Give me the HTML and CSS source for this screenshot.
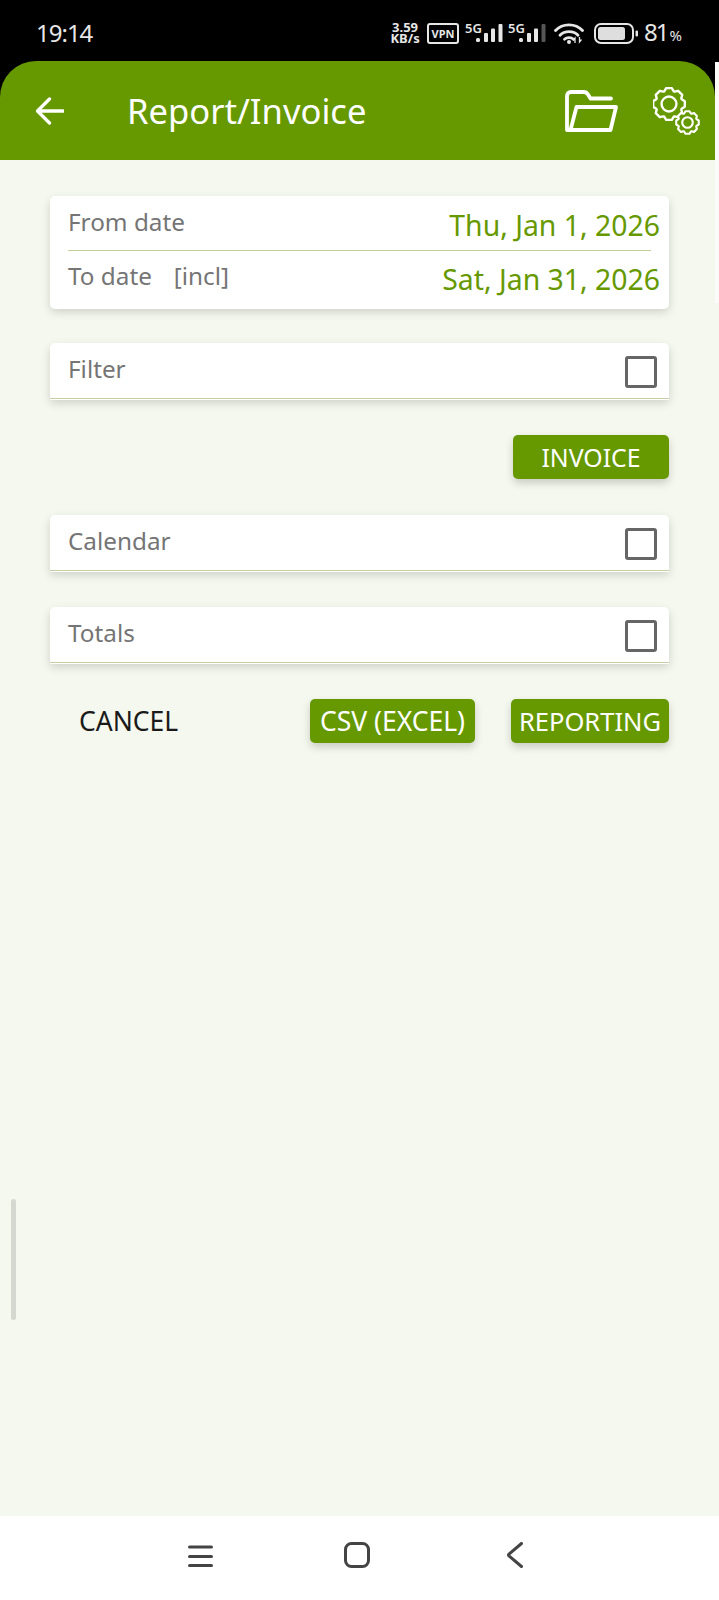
FILE: index.html
```html
<!DOCTYPE html>
<html lang="en">
<head>
    <meta charset="UTF-8">
    <meta name="viewport" content="width=device-width, initial-scale=1.0">
    <title>Report/Invoice</title>

    <link rel="stylesheet" href="styles.css">

</head>
<body>

    <svg class="defs" width="0" height="0">
        <symbol id="gear" viewBox="-12 -12 24 24" overflow="visible">
            <polygon points="-3,-8 -1.8,-10 1.8,-10 3,-8 3.54,-7.78 5.8,-8.34 8.34,-5.8 7.78,-3.54 8,-3 10,-1.8 10,1.8 8,3 7.78,3.54 8.34,5.8 5.8,8.34 3.54,7.78 3,8 1.8,10 -1.8,10 -3,8 -3.54,7.78 -5.8,8.34 -8.34,5.8 -7.78,3.54 -8,3 -10,1.8 -10,-1.8 -8,-3 -7.78,-3.54 -8.34,-5.8 -5.8,-8.34 -3.54,-7.78"/>
            <circle cx="0" cy="0" r="4.7"/>
        </symbol>
    </svg>

    <div class="statusBar">
        <span class="time">19:14</span>
        <div class="statusIcons">
            <span class="speed">3.59<br>KB/s</span>
            <span class="vpn">VPN</span>
            <svg class="signal" width="40" height="25" viewBox="0 0 40 25">
                <text x="0" y="14" class="signalText">5G</text>
                <rect x="11" y="19" width="4" height="4" rx="1.5"/>
                <rect x="19" y="14" width="4" height="9" rx="1"/>
                <rect x="26" y="9.500" width="4" height="13.500" rx="1"/>
                <rect x="33.500" y="5" width="4" height="18" rx="1"/>
            </svg>
            <svg class="signal" width="40" height="25" viewBox="0 0 40 25">
                <text x="0" y="14" class="signalText">5G</text>
                <rect x="11" y="19" width="4" height="4" rx="1.5"/>
                <rect x="19" y="14" width="4" height="9" rx="1"/>
                <rect x="26" y="9.500" width="4" height="13.500" rx="1"/>
                <rect x="33.500" y="5" width="4" height="18" rx="1" fill="#555"/>
            </svg>
            <svg class="wifi" width="31" height="22" viewBox="0 0 31 22">
                <g fill="none" stroke="#e6e6e6" stroke-width="2.8" stroke-linecap="round">
                    <path d="M1.5 8.5C8.5 1 21.5 1 28.500 8.500"/>
                    <path d="M6 13.200C10.500 8.500 19.500 8.500 24 13.200"/>
                    <path d="M10.500 17.300C12.800 15 17.200 15 19.500 17.300"/>
                </g>
                <circle cx="15" cy="20" r="2" fill="#e6e6e6"/>
                <path d="M21 21V16l-2 2.500M25.500 15v5l2-2.500" fill="none" stroke="#e6e6e6" stroke-width="1.300"/>
            </svg>
            <svg class="battery" width="44" height="21" viewBox="0 0 44 21">
                <rect x="1" y="1" width="38" height="19" rx="6" fill="none" stroke="#e6e6e6" stroke-width="2"/>
                <rect x="4" y="4" width="27" height="13" rx="2.500" fill="#dedede"/>
                <rect x="41.500" y="7.500" width="2.500" height="6" rx="1" fill="#e6e6e6"/>
            </svg>
            <span class="percent">81<small>%</small></span>
        </div>
    </div>

    <div class="page">
        <div class="sideStrip"></div>

        <div class="header">
            <svg class="backArrow" width="28" height="28" viewBox="0 0 28 28">
                <path d="M1.500 14H27M13.500 2L1.500 14L13.500 26" fill="none" stroke="#fff" stroke-width="3.300" stroke-linejoin="round" stroke-linecap="round"/>
            </svg>
            <h1 class="title">Report/Invoice</h1>
            <svg class="folder" width="53" height="42" viewBox="0 0 53 42">
                <path d="M5 40H2V6C2 3.500 3.500 2 6 2H19C21 2 22 3 23 4.500L25.500 8.500H46" fill="none" stroke="#fff" stroke-width="3.800" stroke-linecap="round" stroke-linejoin="round"/>
                <path d="M11.500 17H51L45.500 40H5.500Z" fill="none" stroke="#fff" stroke-width="3.800" stroke-linejoin="round"/>
            </svg>
            <svg class="gears" width="48" height="50" viewBox="0 0 48 50">
                <use href="#gear" x="-3" y="-2" width="38" height="38" class="gearBig"/>
                <use href="#gear" x="21" y="22" width="27" height="27" class="gearSmall"/>
            </svg>
        </div>

        <div class="content">
            <div class="card dateCard">
                <div class="dateRow fromRow">
                    <span class="label">From date</span>
                    <span class="dateValue">Thu, Jan 1, 2026</span>
                </div>
                <div class="divider"></div>
                <div class="dateRow toRow">
                    <span class="label">To date &nbsp; <span class="incl">[incl]</span></span>
                    <span class="dateValue">Sat, Jan 31, 2026</span>
                </div>
            </div>

            <div class="card checkCard">
                <span class="label">Filter</span>
                <span class="checkbox"></span>
            </div>

            <div class="invoiceRow">
                <button class="btn invoiceBtn">INVOICE</button>
            </div>

            <div class="card checkCard">
                <span class="label">Calendar</span>
                <span class="checkbox"></span>
            </div>

            <div class="card checkCard">
                <span class="label">Totals</span>
                <span class="checkbox"></span>
            </div>

            <div class="actions">
                <span class="cancel">CANCEL</span>
                <button class="btn csvBtn">CSV (EXCEL)</button>
                <button class="btn reportBtn">REPORTING</button>
            </div>
        </div>

        <div class="scrollThumb"></div>
    </div>

    <div class="navBar">
        <svg class="navMenu" width="25" height="22" viewBox="0 0 25 22">
            <path d="M1.500 2H23.500M1.500 11.500H23.500M1.500 20.500H23.500" stroke="#444" stroke-width="3" stroke-linecap="round"/>
        </svg>
        <svg class="navHome" width="26" height="26" viewBox="0 0 26 26">
            <rect x="1.500" y="1.500" width="23" height="23" rx="6" fill="none" stroke="#444" stroke-width="3"/>
        </svg>
        <svg class="navBack" width="16" height="26" viewBox="0 0 16 26">
            <path d="M14.500 1.500L2 12C1.300 12.700 1.300 13.300 2 14L14.500 24.500" fill="none" stroke="#444" stroke-width="3" stroke-linecap="round"/>
        </svg>
    </div>

</body>
</html>
```

FILE: styles.css
```css
*{padding: 0px; margin: 0px; box-sizing: border-box;}
html, body{width: 719px; height: 1600px; overflow: hidden;}
body{display: flex; flex-direction: column; background: #000; font-family: "Noto Sans", sans-serif;}
.defs{position: absolute;}

.statusBar{display: flex; align-items: center; height: 61px; padding: 5px 37px 0 36px; color: #e6e6e6;}
.time{font-size: 24px; line-height: 30px; letter-spacing: -1px;}
.statusIcons{display: flex; align-items: center; margin-left: auto;}
.speed{width: 44px; font-size: 13px; font-weight: 700; line-height: 11px; text-align: center;}
.vpn{width: 32px; height: 21px; border: 2px solid #e6e6e6; border-radius: 3px; font-size: 11px; font-weight: 700; line-height: 17px; text-align: center;}
.signal{margin: -3px 0 0 6px; fill: #e6e6e6;}
.signal + .signal{margin-left: 3px;}
.signalText{font-size: 13px; font-weight: 600;}
.wifi{margin-left: 6px;}
.battery{margin-left: 9px;}
.percent{margin-left: 6px; font-size: 24px; line-height: 30px; letter-spacing: -2px;}
.percent small{margin-left: 2px; font-size: 15px; letter-spacing: 0;}

.page{position: relative; flex: 1; display: flex; flex-direction: column;}
.sideStrip{position: absolute; top: 1px; right: 0; width: 4px; height: 241px; background: #fbfcf9;}

.header{display: flex; align-items: center; height: 99px; margin-right: 4px; padding: 0 14px 0 36px; background: #669900; border-radius: 36px 36px 0 0;}
.title{margin-left: 63px; color: #fff; font-size: 34.600px; font-weight: 400;}
.folder{margin-left: auto;}
.gears{margin-left: 35px; margin-top: 2px;}
.gearBig, .gearSmall{stroke: #fff; stroke-linejoin: round;}
.gearBig{fill: none; stroke-width: 1.500;}
.gearSmall{fill: #669900; stroke-width: 1.900;}

.content{flex: 1; display: flex; flex-direction: column; gap: 36px; padding: 36px 50px 0 50px; background: #f5f8ee;}
.card{background: #fff; border-radius: 5px; box-shadow: 0 1px 0 #fff, 0 4px 10px rgba(0, 0, 0, .16);}
.label{color: #757575; font-size: 24.300px;}
.incl{margin-left: 3px;}

.dateCard{display: flex; flex-direction: column; height: 112px; margin-bottom: -1px; padding: 0 9px 0 18px;}
.dateRow{display: flex; align-items: center; justify-content: space-between;}
.fromRow{height: 54px;}
.fromRow .label{padding-bottom: 3px;}
.fromRow .dateValue{padding-top: 3px;}
.toRow{flex: 1;}
.toRow .label{padding-bottom: 9px;}
.toRow .dateValue{padding-bottom: 2px;}
.dateValue{color: #669900; font-size: 28.400px;}
.divider{height: 1px; margin-right: 9px; background: #c3cf9b;}

.checkCard{display: flex; align-items: center; justify-content: space-between; height: 56px; padding: 0 12px 0 18px; border-bottom: 1px solid #c6cfa4; border-radius: 5px 5px 0 0;}
.checkCard .label{padding-bottom: 5px;}
.checkbox{width: 32px; height: 32px; margin-top: 2px; border: 3.500px solid #666; border-radius: 3px;}

.invoiceRow{display: flex; justify-content: flex-end;}
.btn{height: 44px; border: 0; border-radius: 5px; background: #669900; color: #fff; font-family: inherit; font-size: 24.800px; box-shadow: 0 4px 9px rgba(0, 0, 0, .18);}
.invoiceBtn{width: 156px;}
.actions{display: flex; align-items: center;}
.cancel{margin-left: 29px; color: #1a1a1a; font-size: 26.500px;}
.csvBtn{width: 165px; margin-left: auto; font-size: 26.500px;}
.reportBtn{width: 158px; margin-left: 36px; font-size: 25.500px;}

.scrollThumb{position: absolute; left: 11px; top: 1138px; width: 5px; height: 121px; background: #d4d8d0; border-radius: 3px;}

.navBar{display: flex; align-items: flex-start; height: 84px; padding: 26px 0 0 188px; background: #fff;}
.navMenu{margin-top: 3px;}
.navHome{margin-left: 131px;}
.navBack{margin-left: 137px;}
```
